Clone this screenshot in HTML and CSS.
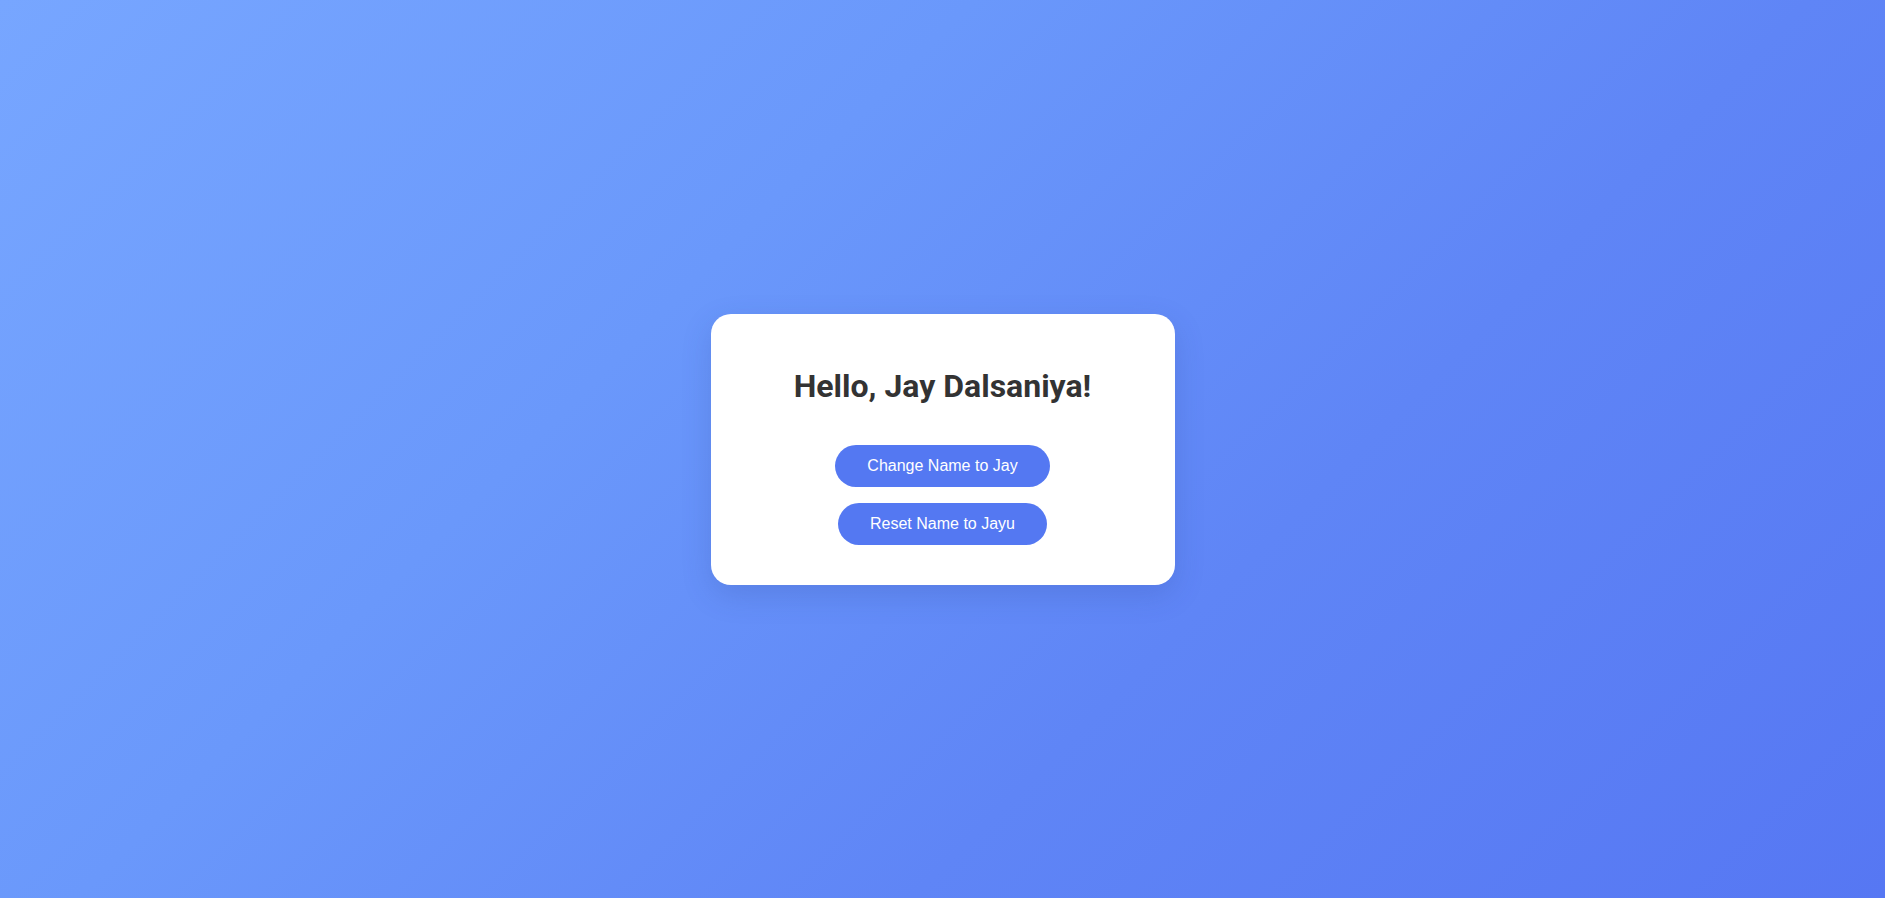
FILE: index.html
```html
<!DOCTYPE html>
<html lang="en">
<head>
<meta charset="utf-8">
<title>Hello</title>
<link rel="stylesheet" href="styles.css">
</head>
<body>
<main class="page">
  <section class="card">
    <h1 class="greeting">Hello, Jay Dalsaniya!</h1>
    <div class="actions">
      <button class="btn">Change Name to Jay</button>
      <button class="btn">Reset Name to Jayu</button>
    </div>
  </section>
</main>
</body>
</html>
```

FILE: styles.css
```css
html, body {
  margin: 0;
  height: 100%;
}
body {
  background: linear-gradient(135deg, #77a6ff 0%, #6a98fb 35%, #5f85f6 65%, #5677f3 100%);
  font-family: "Liberation Sans", Arial, sans-serif;
}
.page {
  height: 100%;
  display: flex;
  align-items: center;
  justify-content: center;
}
.card {
  width: 400px;
  padding: 53px 32px 40px;
  background: #ffffff;
  border-radius: 20px;
  box-shadow: 0 10px 30px rgba(40, 60, 140, 0.18);
  display: flex;
  flex-direction: column;
  align-items: center;
}
.greeting {
  margin: 0;
  font-family: Roboto, "Liberation Sans", sans-serif;
  font-weight: 700;
  font-size: 32px;
  color: #333333;
  text-align: center;
}
.actions {
  margin-top: 40px;
  display: flex;
  flex-direction: column;
  align-items: center;
  gap: 16px;
}
.btn {
  font-family: "Liberation Sans", Arial, sans-serif;
  font-size: 16px;
  line-height: 18px;
  padding: 12px 32px;
  border: none;
  border-radius: 25px;
  background: #5478f2;
  color: #ffffff;
  cursor: pointer;
}
```
